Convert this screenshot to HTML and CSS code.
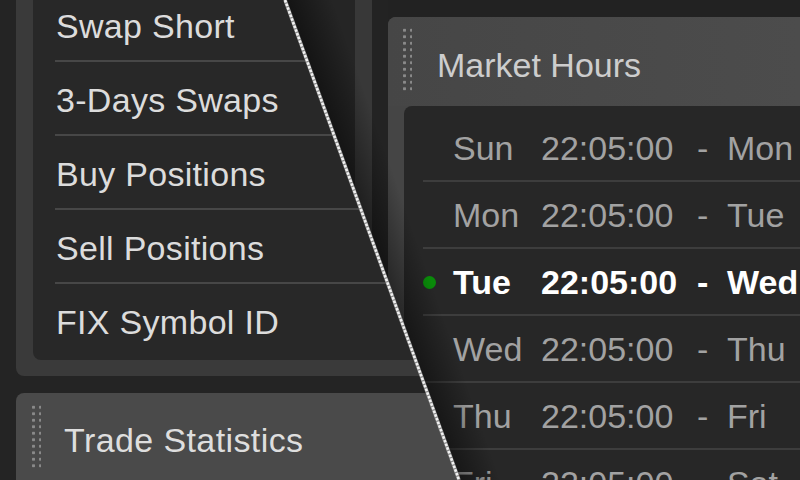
FILE: index.html
```html
<!DOCTYPE html>
<html lang="en">
<head>
<meta charset="utf-8">
<title>Symbol info / Market Hours</title>
<link rel="stylesheet" href="styles.css">
</head>
<body>
<div class="stage">
  <section class="layer left">
    <div class="sym-panel">
      <ul class="sym-list">
        <li class="sym-row">Swap Short</li>
        <li class="sym-row">3-Days Swaps</li>
        <li class="sym-row">Buy Positions</li>
        <li class="sym-row">Sell Positions</li>
        <li class="sym-row">FIX Symbol ID</li>
      </ul>
    </div>
    <div class="ts-panel">
      <span class="grip"></span>
      <h2 class="panel-title ts-title">Trade Statistics</h2>
    </div>
  </section>

  <section class="layer right">
    <div class="r-pad"></div>
    <div class="r-band"></div>
    <div class="r-gap"></div>
    <div class="mh-panel">
      <div class="mh-head">
        <span class="grip"></span>
        <h2 class="panel-title mh-title">Market Hours</h2>
      </div>
      <div class="mh-body">
        <div class="hr-row"><span></span><span>Sun</span><span>22:05:00</span><span>-</span><span>Mon</span></div>
        <div class="hr-row"><span></span><span>Mon</span><span>22:05:00</span><span>-</span><span>Tue</span></div>
        <div class="hr-row is-now"><span class="dot"></span><span>Tue</span><span>22:05:00</span><span>-</span><span>Wed</span></div>
        <div class="hr-row"><span></span><span>Wed</span><span>22:05:00</span><span>-</span><span>Thu</span></div>
        <div class="hr-row"><span></span><span>Thu</span><span>22:05:00</span><span>-</span><span>Fri</span></div>
        <div class="hr-row"><span></span><span>Fri</span><span>22:05:00</span><span>-</span><span>Sat</span></div>
      </div>
    </div>
  </section>

  <svg class="layer cut" width="800" height="480" viewBox="0 0 800 480" aria-hidden="true">
    <defs>
      <linearGradient id="shade" gradientUnits="userSpaceOnUse" x1="372" y1="240" x2="412" y2="226">
        <stop offset="0" stop-color="#000" stop-opacity="0.45"/>
        <stop offset="1" stop-color="#000" stop-opacity="0"/>
      </linearGradient>
    </defs>
    <polygon points="285,0 800,0 800,480 459,480" fill="url(#shade)"/>
    <line x1="285" y1="0" x2="459" y2="480" stroke="#8a8a8a" stroke-width="3.6"/>
    <line x1="285" y1="0" x2="459" y2="480" stroke="#f2f2f2" stroke-width="2.6" stroke-dasharray="2.6 1.3"/>
  </svg>
</div>
</body>
</html>
```
FILE: styles.css
```css
* { box-sizing: border-box; }

html, body {
  margin: 0;
  padding: 0;
  background: #242424;
}

.stage {
  width: 800px;
  height: 480px;
  overflow: hidden;
  display: grid;
  font-family: "Liberation Sans", Arial, sans-serif;
  font-size: 34px;
}

.layer {
  grid-area: 1 / 1;
  width: 800px;
  height: 480px;
  overflow: hidden;
}

/* ---------- left layer ---------- */
.left {
  background: #242424;
  padding-left: 16px;
  display: flex;
  flex-direction: column;
}

.sym-panel {
  margin-top: -30px;
  width: 820px;
  background: #3a3a3a;
  border-radius: 0 0 8px 8px;
  padding: 0 0 16px 17px;
}

.sym-list {
  list-style: none;
  margin: 0;
  background: #282828;
  border-radius: 0 0 8px 8px;
  padding: 18px 0 4px 22px;
}

.sym-row {
  height: 74px;
  display: flex;
  align-items: center;
  padding: 4px 0 0 1px;
  color: #dcdcdc;
  letter-spacing: 0.3px;
  border-bottom: 2px solid #474747;
}

.sym-row:last-child {
  height: 72px;
  border-bottom: none;
}

.ts-panel {
  margin-top: 17px;
  flex: 1;
  width: 820px;
  background: #4a4a4a;
  border-radius: 8px 0 0 0;
  display: flex;
  align-items: flex-start;
  padding-left: 14px;
}

.ts-panel .grip {
  margin-top: 11px;
}

.grip {
  flex: none;
  width: 11px;
  height: 65px;
  background-image: radial-gradient(circle at center, #8a8a8a 1.3px, transparent 1.9px);
  background-size: 7px 6.5px;
}

.panel-title {
  margin: 0;
  font-size: 34px;
  font-weight: normal;
  line-height: 40px;
}

.ts-title {
  margin-top: 27px;
  margin-left: 23px;
  letter-spacing: 0.4px;
  color: #dedede;
}

/* ---------- right layer ---------- */
.right {
  background: #222222;
  display: flex;
  clip-path: polygon(285px 0, 800px 0, 800px 480px, 459px 480px);
}

.r-pad { flex: none; width: 355px; background: #252525; }
.r-band { flex: none; width: 17px; background: #383838; }
.r-gap { flex: none; width: 16px; background: #232323; }

.mh-panel {
  flex: 1;
  margin-top: 17px;
  background: #454545;
  border-radius: 8px 0 0 0;
  display: flex;
  flex-direction: column;
}

.mh-head {
  height: 89px;
  flex: none;
  display: flex;
  align-items: flex-start;
  padding-left: 13px;
  background: linear-gradient(90deg, #464646, #4c4c4c);
  border-radius: 8px 0 0 0;
}

.mh-head .grip {
  margin-top: 10px;
}

.mh-title {
  margin-top: 28px;
  margin-left: 25px;
  color: #cdcdcd;
}

.mh-body {
  flex: 1;
  margin-left: 16px;
  background: #272727;
  border-radius: 8px 0 0 0;
  padding: 9px 0 0 19px;
}

.hr-row {
  height: 67px;
  display: grid;
  grid-template-columns: 30px 88px 156px 30px auto;
  align-items: center;
  padding-top: 2px;
  color: #a2a2a2;
  border-bottom: 2px solid #3d3d3d;
  white-space: nowrap;
}

.hr-row.is-now {
  color: #ffffff;
  font-weight: bold;
}

.dot {
  width: 13px;
  height: 13px;
  border-radius: 50%;
  background: #0a8a0a;
}

/* the diagonal cut drawn over both layers */
.cut {
  position: relative;
  z-index: 2;
}
```
